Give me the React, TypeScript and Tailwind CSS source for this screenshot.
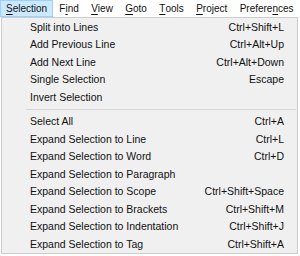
const MENUS = [
  { label: "Selection", key: 0 },
  { label: "Find", key: 1 },
  { label: "View", key: 0 },
  { label: "Goto", key: 0 },
  { label: "Tools", key: 0 },
  { label: "Project", key: 0 },
  { label: "Preferences", key: 7 },
];

const GROUPS = [
  [
    ["Split into Lines", "Ctrl+Shift+L"],
    ["Add Previous Line", "Ctrl+Alt+Up"],
    ["Add Next Line", "Ctrl+Alt+Down"],
    ["Single Selection", "Escape"],
    ["Invert Selection", ""],
  ],
  [
    ["Select All", "Ctrl+A"],
    ["Expand Selection to Line", "Ctrl+L"],
    ["Expand Selection to Word", "Ctrl+D"],
    ["Expand Selection to Paragraph", ""],
    ["Expand Selection to Scope", "Ctrl+Shift+Space"],
    ["Expand Selection to Brackets", "Ctrl+Shift+M"],
    ["Expand Selection to Indentation", "Ctrl+Shift+J"],
    ["Expand Selection to Tag", "Ctrl+Shift+A"],
  ],
];

function MenuLabel({ label, index }: { label: string; index: number }) {
  return (
    <>
      {label.slice(0, index)}
      <span className="underline underline-offset-2">{label[index]}</span>
      {label.slice(index + 1)}
    </>
  );
}

export default function App() {
  return (
    <div
      className="w-[300px] h-[256px] bg-white text-[10.5px] text-[#111] overflow-hidden"
      style={{ fontFamily: '"Liberation Sans", Arial, sans-serif' }}
    >
      <div className="flex h-[17px] items-start text-[10px]">
        {MENUS.map((m, i) => (
          <div
            key={m.label}
            className={
              i === 0
                ? "h-[17px] flex items-center px-[5px] bg-[#cce8ff] border border-[#99d1ff]"
                : "h-[17px] flex items-center px-[6.2px]"
            }
          >
            <MenuLabel label={m.label} index={m.key} />
          </div>
        ))}
      </div>
      <div className="ml-[1px] w-[297px] h-[236.5px] bg-[#f0f0f0] border border-[#cccccc]">
        {GROUPS.map((group, gi) => (
          <div key={gi}>
            {gi > 0 && (
              <div className="h-[7px] flex items-center pl-[24px] pr-[1px]">
                <div className="h-px w-full bg-[#d7d7d7]" />
              </div>
            )}
            {group.map(([name, shortcut]) => (
              <div
                key={name}
                className="h-[17.5px] flex items-center justify-between pl-[28px] pr-[13px] leading-none"
              >
                <span>{name}</span>
                <span>{shortcut}</span>
              </div>
            ))}
          </div>
        ))}
      </div>
    </div>
  );
}
